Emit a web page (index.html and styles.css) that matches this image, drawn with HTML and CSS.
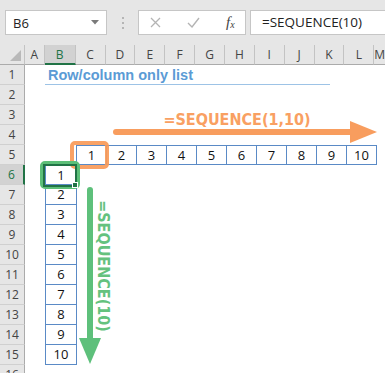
FILE: index.html
```html
<!doctype html>
<html lang="en">
<head>
<meta charset="utf-8">
<title>SEQUENCE row and column</title>
<link rel="stylesheet" href="styles.css">
</head>
<body>

<div class="app">
	<div class="bar">
		<div class="namebox">
			<span>B6</span>
			<svg class="caret" width="8" height="5" viewBox="0 0 8 5"><path d="M0 0h8L4 4.5z" fill="#7a7a7a"/></svg>
		</div>
		<div class="grip"><i></i><i></i><i></i></div>
		<div class="fbtns">
			<svg class="btn-x" width="11" height="11" viewBox="0 0 11 11"><path d="M1 1l9 9M10 1l-9 9" stroke="#b4b4b4" stroke-width="1.3" fill="none"/></svg>
			<svg class="btn-ok" width="13" height="11" viewBox="0 0 13 11"><path d="M1 6l4 4l7-9" stroke="#b4b4b4" stroke-width="1.4" fill="none"/></svg>
			<span class="fx"><i>f</i><sub>x</sub></span>
		</div>
		<div class="formula">=SEQUENCE(10)</div>
	</div>

	<div class="sheet">
		<div class="row head">
			<div class="corner"><svg width="11" height="11" viewBox="0 0 11 11"><path d="M11 0v11H0z" fill="#b9b9b9"/></svg></div>
			<div class="ch col-a">A</div>
			<div class="ch col-b sel">B</div>
			<div class="ch">C</div>
			<div class="ch">D</div>
			<div class="ch">E</div>
			<div class="ch">F</div>
			<div class="ch">G</div>
			<div class="ch">H</div>
			<div class="ch">I</div>
			<div class="ch">J</div>
			<div class="ch">K</div>
			<div class="ch">L</div>
			<div class="ch col-m">M</div>
		</div>

		<div class="row">
			<div class="rh">1</div>
			<div class="skip-a"></div>
			<div class="title">Row/column only list</div>
		</div>
		<div class="row"><div class="rh">2</div></div>
		<div class="row"><div class="rh">3</div></div>
		<div class="row"><div class="rh">4</div></div>
		<div class="row">
			<div class="rh">5</div>
			<div class="skip-ab"></div>
			<div class="seq-row">
				<div class="c">1</div><div class="c">2</div><div class="c">3</div><div class="c">4</div><div class="c">5</div>
				<div class="c">6</div><div class="c">7</div><div class="c">8</div><div class="c">9</div><div class="c">10</div>
			</div>
		</div>
		<div class="row"><div class="rh sel">6</div><div class="skip-a"></div><div class="b first">1</div></div>
		<div class="row"><div class="rh">7</div><div class="skip-a"></div><div class="b">2</div></div>
		<div class="row"><div class="rh">8</div><div class="skip-a"></div><div class="b">3</div></div>
		<div class="row"><div class="rh">9</div><div class="skip-a"></div><div class="b">4</div></div>
		<div class="row"><div class="rh">10</div><div class="skip-a"></div><div class="b">5</div></div>
		<div class="row"><div class="rh">11</div><div class="skip-a"></div><div class="b">6</div></div>
		<div class="row"><div class="rh">12</div><div class="skip-a"></div><div class="b">7</div></div>
		<div class="row"><div class="rh">13</div><div class="skip-a"></div><div class="b">8</div></div>
		<div class="row"><div class="rh">14</div><div class="skip-a"></div><div class="b">9</div></div>
		<div class="row"><div class="rh">15</div><div class="skip-a"></div><div class="b">10</div></div>
		<div class="row"><div class="rh">16</div></div>
	</div>

	<!-- annotations drawn over the sheet -->
	<svg class="marks" width="385" height="373" viewBox="0 0 385 373">
		<rect x="72" y="143" width="35" height="24" rx="3" fill="none" stroke="#f89a58" stroke-width="4" opacity=".92"/>
		<rect x="42" y="163" width="36" height="24" rx="3" fill="none" stroke="#5cbf78" stroke-width="4"/>
		<rect x="44" y="165" width="32" height="21" fill="none" stroke="#217346" stroke-width="2"/>
		<rect x="72.5" y="182.5" width="5" height="5" fill="#217346" stroke="#fff" stroke-width="1"/>

		<line x1="116" y1="132" x2="352" y2="132" stroke="#f89d5e" stroke-width="6" stroke-linecap="round"/>
		<polygon points="350,121 377,132 350,143" fill="#f89d5e"/>
		<text class="note note-orange" x="237" y="125" text-anchor="middle">=SEQUENCE(1,10)</text>

		<line x1="90" y1="190" x2="90" y2="342" stroke="#5ec07b" stroke-width="6" stroke-linecap="round"/>
		<polygon points="79,338 101,338 90,364" fill="#5ec07b"/>
		<text class="note note-green" transform="translate(98,266) rotate(90)" text-anchor="middle">=SEQUENCE(10)</text>
	</svg>
</div>

</body>
</html>
```

FILE: styles.css
```css
body {
	margin: 0;
	background: #fff;
	font-family: "Open Sans", "Noto Sans", sans-serif;
}
.app {
	position: relative;
	width: 385px;
	height: 373px;
	overflow: hidden;
}

/* formula bar */
.bar {
	height: 45px;
	box-sizing: border-box;
	padding-top: 10px;
	background: #e6e6e6;
	display: flex;
	align-items: flex-start;
}
.namebox {
	margin-left: 5px;
	width: 102px;
	height: 25px;
	box-sizing: border-box;
	background: #fff;
	border: 1px solid #c6c6c6;
	display: flex;
	align-items: center;
	justify-content: space-between;
	padding: 0 7px 0 7px;
	font-size: 13px;
	color: #222;
}
.grip {
	width: 31px;
	height: 25px;
	display: flex;
	flex-direction: column;
	align-items: center;
	justify-content: center;
	gap: 3px;
}
.grip i {
	width: 2px;
	height: 2px;
	background: #b5b5b5;
}
.fbtns {
	width: 108px;
	height: 25px;
	box-sizing: border-box;
	background: #fff;
	border: 1px solid #c6c6c6;
	display: flex;
	align-items: center;
}
.btn-x {
	margin-left: 11px;
}
.btn-ok {
	margin-left: 26px;
}
.fx {
	margin-left: 26px;
	font-family: "Liberation Serif", serif;
	color: #444;
	font-size: 15px;
	line-height: 1;
}
.fx sub {
	font-size: 10px;
	vertical-align: -1px;
	font-style: italic;
}
.formula {
	margin-left: 4px;
	flex: 1;
	height: 25px;
	box-sizing: border-box;
	background: #fff;
	border: 1px solid #c6c6c6;
	border-right: none;
	padding-left: 11px;
	font-size: 13.5px;
	line-height: 23px;
	color: #222;
}

/* sheet */
.sheet {
	background: #fff;
}
.row {
	display: flex;
	height: 20px;
}
.head {
	background: #e6e6e6;
}
.corner {
	width: 25px;
	height: 20px;
	box-sizing: border-box;
	border-right: 1px solid #c3c3c3;
	border-bottom: 1px solid #ababab;
	display: flex;
	align-items: flex-end;
	justify-content: flex-end;
	padding: 0 3px 3px 0;
}
.ch {
	width: 30px;
	height: 20px;
	box-sizing: border-box;
	border-right: 1px solid #c3c3c3;
	border-bottom: 1px solid #ababab;
	text-align: center;
	font-size: 12px;
	line-height: 20px;
	color: #444;
}
.ch.col-a {
	width: 20px;
}
.ch.col-b {
	width: 31px;
}
.ch.col-m {
	flex: 1;
	border-right: none;
}
.ch.sel {
	background: #d2d2d2;
	color: #217346;
	border-bottom: 2px solid #217346;
}
.rh {
	width: 25px;
	flex: none;
	height: 20px;
	box-sizing: border-box;
	background: #e6e6e6;
	border-right: 1px solid #ababab;
	border-bottom: 1px solid #d0d0d0;
	text-align: center;
	font-size: 12px;
	line-height: 20px;
	color: #444;
}
.rh.sel {
	background: #d2d2d2;
	color: #217346;
	border-right: 2px solid #217346;
}
.skip-a {
	width: 20px;
	flex: none;
}
.skip-ab {
	width: 51px;
	flex: none;
}
.title {
	width: 285px;
	box-sizing: border-box;
	padding-left: 3px;
	border-bottom: 1px solid #9dc3e6;
	font-family: "Liberation Sans", Arial, sans-serif;
	font-weight: bold;
	font-size: 14.5px;
	line-height: 20px;
	color: #5b9bd5;
}

/* list cells */
.seq-row {
	display: flex;
	border-left: 1px solid #5a8ac6;
}
.c, .b {
	width: 30px;
	height: 20px;
	box-sizing: border-box;
	border-right: 1px solid #5a8ac6;
	border-top: 1px solid #5a8ac6;
	border-bottom: 1px solid #5a8ac6;
	text-align: center;
	font-size: 13px;
	line-height: 19px;
	color: #111;
}
.b {
	width: 32px;
	border-left: 1px solid #5a8ac6;
	border-top: none;
}
.b.first {
	border-top: 1px solid #5a8ac6;
}

/* annotations */
.marks {
	position: absolute;
	top: 0;
	left: 0;
	pointer-events: none;
}
.note {
	font-family: "DejaVu Sans Condensed", "DejaVu Sans", sans-serif;
	font-stretch: condensed;
	font-weight: bold;
	font-size: 16px;
}
.note-orange {
	fill: #f9a062;
}
.note-green {
	fill: #64c27e;
}
```
